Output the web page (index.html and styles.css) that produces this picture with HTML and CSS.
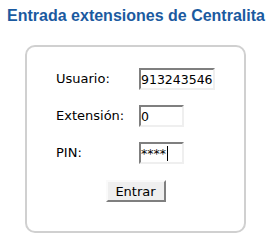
FILE: index.html
```html
<!DOCTYPE html>
<html lang="es">
  <head>
    <meta charset="UTF-8" />
    <title>Centralita</title>
    <link rel="stylesheet" href="styles.css">
  </head>
  <body>
    <h1 class="title">Entrada extensiones de Centralita</h1>
    <form class="login-box">
      <div class="login-grid">
        <label for="usuario">Usuario:</label>
        <input id="usuario" class="field field-long" type="text" value="913243546" />

        <label for="extension">Extensión:</label>
        <input id="extension" class="field" type="text" value="0" />

        <label for="pin">PIN:</label>
        <div class="pin-wrap">
          <input id="pin" class="field" type="text" value="****" />
          <span class="caret"></span>
        </div>
      </div>
      <div class="actions">
        <button type="button" class="submit">Entrar</button>
      </div>
    </form>
  </body>
</html>
```

FILE: styles.css
```css
html,
body {
  margin: 0;
  padding: 0;
  background: #fff;
}

body {
  font-family: "DejaVu Sans", sans-serif;
  font-size: 13px;
  color: #000;
}

/* Title */
.title {
  margin: 6px 0 0;
  font-family: "Liberation Sans", Arial, sans-serif;
  font-size: 16px;
  font-weight: bold;
  line-height: 19px;
  text-align: center;
  color: #1b5aa0;
}

/* Login box */
.login-box {
  box-sizing: border-box;
  width: 221px;
  margin: 20px 0 0 25px;
  padding: 21px 0 29px 29px;
  border: 2px solid #d0d0d0;
  border-radius: 10px;
}

.login-grid {
  display: grid;
  grid-template-columns: 83px auto;
  row-gap: 15px;
  align-items: center;
}

.login-grid label {
  line-height: 22px;
}

.field {
  box-sizing: border-box;
  width: 45px;
  height: 22px;
  margin: 0;
  padding: 0;
  font-family: "DejaVu Sans", sans-serif;
  font-size: 12.5px;
  color: #000;
  background: #fff;
  border-style: solid;
  border-width: 2px;
  border-color: #7f7f7f #efefef #efefef #7f7f7f;
  outline: none;
}

.field.field-long {
  width: 76px;
}

.pin-wrap {
  position: relative;
  width: 45px;
  height: 22px;
}

.pin-wrap .caret {
  position: absolute;
  top: 4px;
  left: 28px;
  width: 1px;
  height: 15px;
  background: #000;
}

.actions {
  display: flex;
  justify-content: center;
  margin-top: 16px;
  padding-right: 29px;
}

.submit {
  box-sizing: border-box;
  width: 60px;
  height: 22px;
  margin: 0;
  padding: 0;
  font-family: "DejaVu Sans", sans-serif;
  font-size: 13px;
  color: #000;
  background: #efefef;
  border-style: solid;
  border-width: 2px;
  border-color: #fafafa #7f7f7f #7f7f7f #fafafa;
}
```
